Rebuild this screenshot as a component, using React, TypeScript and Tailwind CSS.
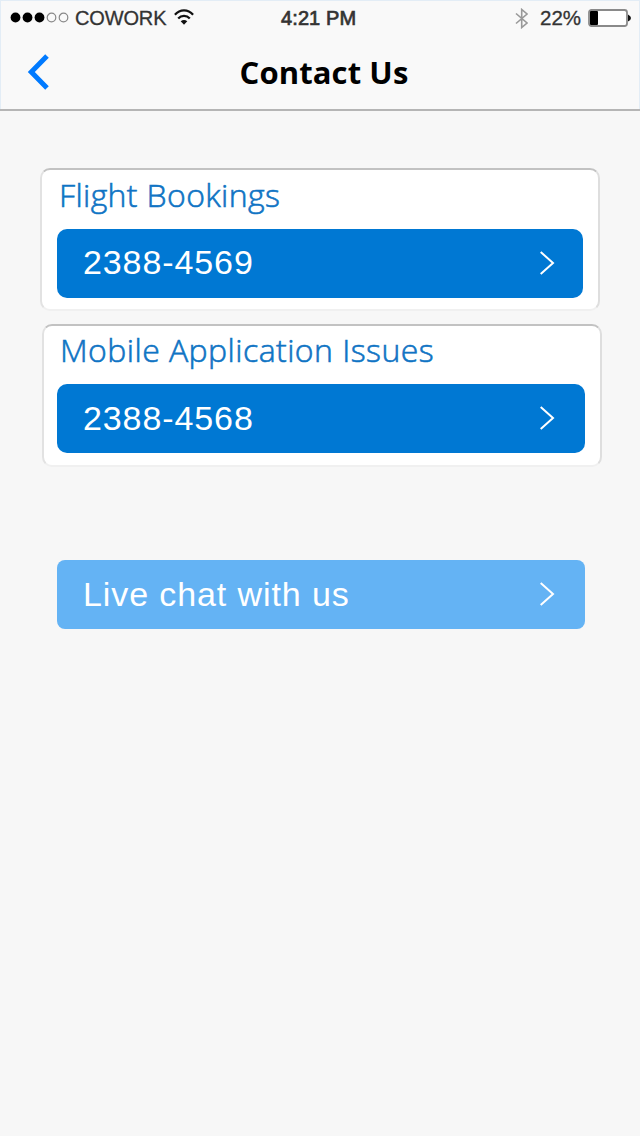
import type { ReactNode } from 'react';

const SignalDots = () => (
  <svg width="60" height="12" viewBox="0 0 60 12">
    <circle cx="5.5" cy="5.5" r="4.9" fill="#000" />
    <circle cx="17.5" cy="5.5" r="4.9" fill="#000" />
    <circle cx="29.5" cy="5.5" r="4.9" fill="#000" />
    <circle cx="41.5" cy="5.5" r="4.3" fill="none" stroke="#888" strokeWidth="1.2" />
    <circle cx="53.5" cy="5.5" r="4.3" fill="none" stroke="#888" strokeWidth="1.2" />
  </svg>
);

const WifiIcon = () => (
  <svg width="20" height="16" viewBox="0 0 20 16" fill="none" stroke="#111" strokeWidth="2.2">
    <path d="M0.9 5.8C6-0.1 14-0.1 19.1 5.8" />
    <path d="M4.2 9.6C7.4 6 12.6 6 15.8 9.6" />
    <path d="M10 15.8L6.7 12.3C8.7 10.4 11.3 10.4 13.3 12.3Z" fill="#111" stroke="none" />
  </svg>
);

const BluetoothIcon = () => (
  <svg width="13" height="21" viewBox="0 0 13 21" fill="none" stroke="#999" strokeWidth="1.6">
    <path d="M1 5.5L12 15L6.7 19.5V1.5L12 6L1 15.5" />
  </svg>
);

const BatteryIcon = () => (
  <svg width="43" height="18" viewBox="0 0 43 18">
    <rect x="1" y="1" width="38" height="16" rx="2.5" fill="#fff" stroke="#8a8a8a" strokeWidth="1.8" />
    <rect x="2" y="2" width="8" height="14" rx="1" fill="#000" />
    <path d="M40 5.5Q43 7 43 9Q43 11 40 12.5Z" fill="#111" />
  </svg>
);

const ChevronRight = () => (
  <svg width="16" height="26" viewBox="0 0 16 26" fill="none" stroke="#fff" strokeWidth="2">
    <path d="M1.7 1L14 12L1.7 23" />
  </svg>
);

const StatusBar = () => (
  <div className="grid h-9 grid-cols-[1fr_76px_1fr] items-center text-[20px] text-[#333]">
    <div className="flex items-center pl-[10px]">
      <SignalDots />
      <span className="ml-[5px] w-[93px] whitespace-nowrap tracking-[-0.15px] [-webkit-text-stroke:0.3px_#333]">
        COWORK
      </span>
      <span className="ml-[6px] pb-[2px]">
        <WifiIcon />
      </span>
    </div>
    <span className="-ml-[1px] whitespace-nowrap text-[20px] tracking-[0.1px] [-webkit-text-stroke:0.7px_#333]">
      4:21 PM
    </span>
    <div className="flex items-center justify-end pr-[9px]">
      <BluetoothIcon />
      <span className="ml-[12px] w-[48px] whitespace-nowrap text-[20.5px] [-webkit-text-stroke:0.3px_#333]">22%</span>
      <BatteryIcon />
    </div>
  </div>
);

const ContactButton = ({ label, className }: { label: string; className: string }) => (
  <button
    type="button"
    className={`flex h-[69px] shrink-0 items-center justify-between pl-[26px] text-[34px] tracking-[0.9px] text-white ${className}`}
  >
    <span className="whitespace-nowrap">{label}</span>
    <ChevronRight />
  </button>
);

const ContactCard = ({ title, className, children }: { title: string; className: string; children: ReactNode }) => (
  <section
    className={`flex h-[143px] w-[560px] flex-col rounded-[10px] border-2 border-t-[#c2c2c2] border-r-[#dedede] border-b-[#f0f0f0] border-l-[#e2e2e2] bg-white ${className}`}
  >
    <h2 className="h-12 whitespace-nowrap font-['Open_Sans',sans-serif] text-[32px] font-light text-[#0f74c4] [-webkit-text-stroke:0.6px_#0f74c4]">
      {title}
    </h2>
    {children}
  </section>
);

const App = () => {
  return (
    <div className="h-[1136px] w-[640px] overflow-hidden bg-[#f7f7f7] font-['Liberation_Sans',sans-serif]">
      <header className="h-[111px] border-b-2 border-b-[#b5b5b5] bg-[#f9f9f9] shadow-[inset_1px_1px_0_#e3edf6,inset_-1px_0_0_#e3edf6]">
        <StatusBar />
        <div className="grid h-[73px] grid-cols-[1fr_auto_1fr] items-center">
          <button type="button" aria-label="Back" className="pb-[1px] pl-[27px]">
            <svg width="23" height="36" viewBox="0 0 23 36" fill="none" stroke="#007aff" strokeWidth="5">
              <path d="M20 2L4.3 18L20 34" />
            </svg>
          </button>
          <h1 className="whitespace-nowrap pl-[8px] font-['Open_Sans',sans-serif] text-[31px] font-bold tracking-[0.1px] text-black">
            Contact Us
          </h1>
          <div />
        </div>
      </header>

      <main className="flex flex-col pt-[57px]">
        <ContactCard title="Flight Bookings" className="ml-[40px] pt-[1px] pl-[15px] tracking-[0.36px] [&>h2]:pl-[2px]">
          <ContactButton
            label="2388-4569"
            className="mt-[10px] w-[526px] rounded-[10px] bg-[#0078d3] pr-[28px] [&>span]:pb-[3px]"
          />
        </ContactCard>
        <ContactCard
          title="Mobile Application Issues"
          className="mt-[13px] ml-[42px] pl-[13px] tracking-[0.45px] [&>h2]:pl-[3px]"
        >
          <ContactButton label="2388-4568" className="mt-[10px] w-[528px] rounded-[10px] bg-[#0078d3] pr-[30px]" />
        </ContactCard>
        <ContactButton
          label="Live chat with us"
          className="mt-[93px] ml-[57px] w-[528px] rounded-[8px] bg-[#64b3f4] pr-[30px]"
        />
      </main>
    </div>
  );
};

export default App;
